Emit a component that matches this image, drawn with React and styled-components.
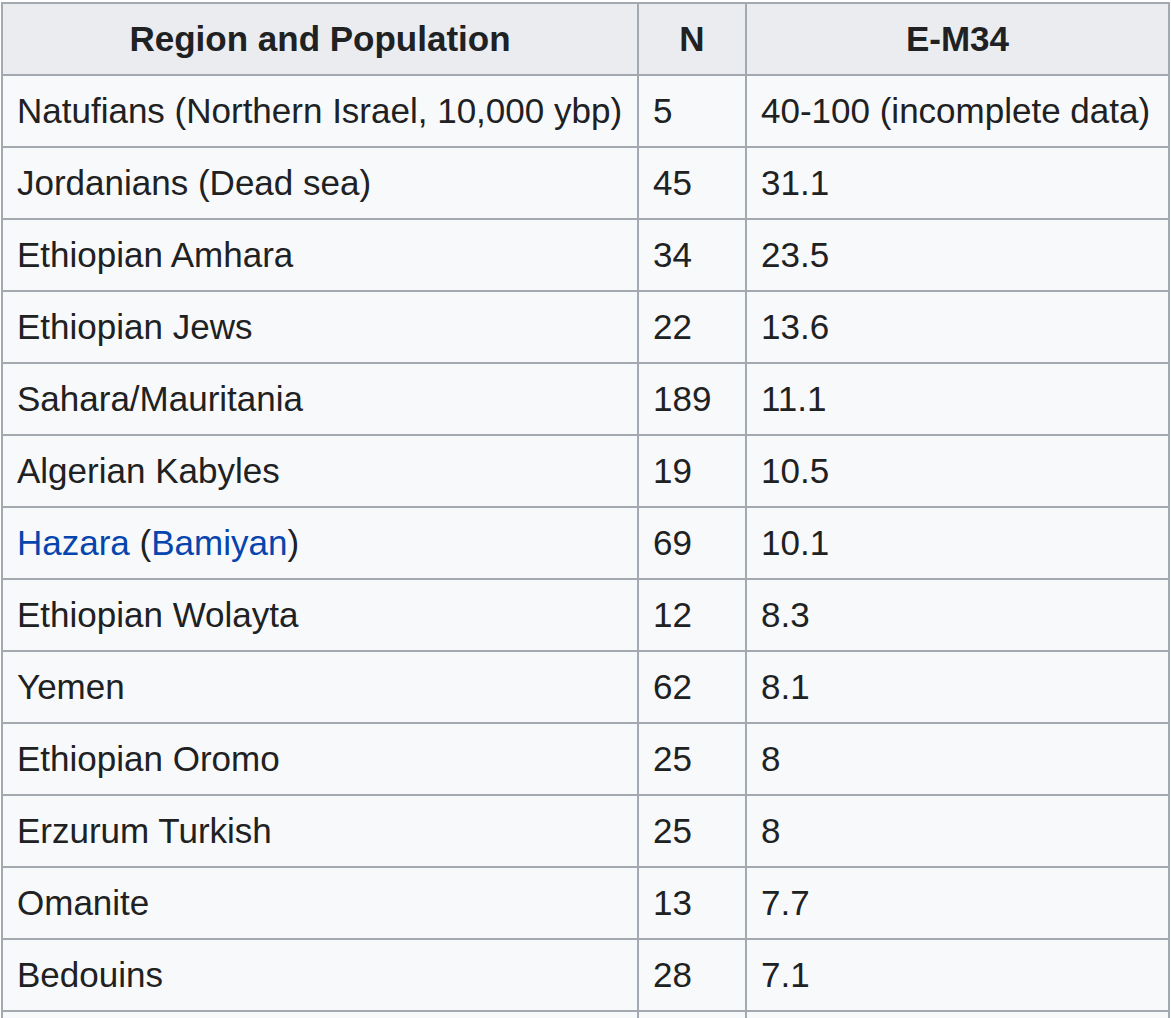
import React from 'react';
import styled, { createGlobalStyle } from 'styled-components';

const GlobalStyle = createGlobalStyle`
  body {
    margin: 0;
    background: #ffffff;
    font-family: "Liberation Sans", Arial, sans-serif;
    color: #202122;
  }
`;

const Table = styled.table`
  margin: 2px 0 0 1px;
  border-collapse: separate;
  border-spacing: 0;
  border-left: 2px solid #a2a9b1;
  border-top: 2px solid #a2a9b1;
  table-layout: fixed;
  width: 1169px;
  font-size: 35px;
  line-height: 56px;
  color: #202122;
`;

const Head = styled.th`
  box-sizing: border-box;
  width: ${p => p.$w}px;
  background: #eaecf0;
  border-right: 2px solid #a2a9b1;
  border-bottom: 2px solid #a2a9b1;
  padding: 7px 14px;
  font-weight: bold;
  text-align: center;
  white-space: nowrap;
`;

const Cell = styled.td`
  background: #f8f9fa;
  border-right: 2px solid #a2a9b1;
  border-bottom: 2px solid #a2a9b1;
  padding: 7px 14px;
  text-align: left;
  white-space: nowrap;
`;

const Link = styled.a`
  color: #0645ad;
  text-decoration: none;
`;

const rows = [
  ['Natufians (Northern Israel, 10,000 ybp)', '5', '40-100 (incomplete data)'],
  ['Jordanians (Dead sea)', '45', '31.1'],
  ['Ethiopian Amhara', '34', '23.5'],
  ['Ethiopian Jews', '22', '13.6'],
  ['Sahara/Mauritania', '189', '11.1'],
  ['Algerian Kabyles', '19', '10.5'],
  ['hazara', '69', '10.1'],
  ['Ethiopian Wolayta', '12', '8.3'],
  ['Yemen', '62', '8.1'],
  ['Ethiopian Oromo', '25', '8'],
  ['Erzurum Turkish', '25', '8'],
  ['Omanite', '13', '7.7'],
  ['Bedouins', '28', '7.1'],
  ['Palestinian Arabs', '143', '6.3'],
];

const Population = ({ name }) =>
  name === 'hazara' ? (
    <>
      <Link href="#">Hazara</Link> (<Link href="#">Bamiyan</Link>)
    </>
  ) : (
    name
  );

const App = () => (
  <>
    <GlobalStyle />
    <Table>
      <thead>
        <tr>
          <Head $w={636}>Region and Population</Head>
          <Head $w={108}>N</Head>
          <Head $w={423}>E-M34</Head>
        </tr>
      </thead>
      <tbody>
        {rows.map(([name, n, pct]) => (
          <tr key={name}>
            <Cell><Population name={name} /></Cell>
            <Cell>{n}</Cell>
            <Cell>{pct}</Cell>
          </tr>
        ))}
      </tbody>
    </Table>
  </>
);

export default App;
